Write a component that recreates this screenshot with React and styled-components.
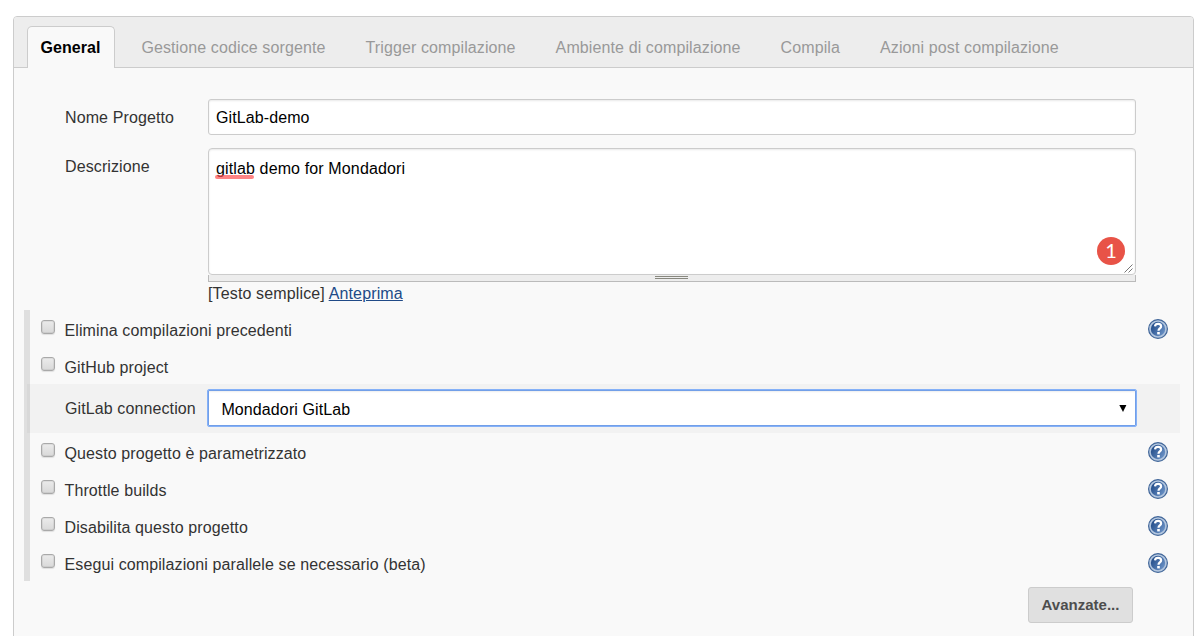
import React from "react";
import styled, { createGlobalStyle } from "styled-components";

const GlobalStyle = createGlobalStyle`
  *, *::before, *::after { box-sizing: border-box; }
  body {
    margin: 0;
    background: #fff;
    overflow: hidden;
    color: #333;
    font: 16px/20px "Liberation Sans", Arial, sans-serif;
    letter-spacing: 0.11px;
  }
`;

const Page = styled.main`
  height: 636px;
  padding: 16px 2px 0 13px;
  overflow: hidden;
`;

const Panel = styled.section`
  height: 640px;
  background: #f9f9f9;
  border: 1px solid #ccc;
  border-radius: 4px 4px 0 0;
`;

const TabBar = styled.nav`
  display: flex;
  height: 51px;
  padding: 9px 0 0 13px;
  background: #ededed;
  border-bottom: 1px solid #ccc;
  border-radius: 3px 3px 0 0;
`;

const Tab = styled.a`
  height: ${(p) => (p.$active ? 42 : 41)}px;
  width: ${(p) => (p.$active ? "88px" : "auto")};
  padding: 11px ${(p) => (p.$active ? 12.5 : 13)}px 0;
  margin-right: ${(p) => (p.$active ? 12.4 : 12)}px;
  letter-spacing: ${(p) => (p.$active ? 0.05 : 0.11)}px;
  white-space: nowrap;
  color: ${(p) => (p.$active ? "#000" : "#999")};
  font-weight: ${(p) => (p.$active ? 700 : 400)};
  background: ${(p) => (p.$active ? "#f9f9f9" : "transparent")};
  border: solid ${(p) => (p.$active ? "#ccc" : "transparent")};
  border-width: 1px 1px 0;
  border-radius: 5px 5px 0 0;
`;

const Form = styled.form`
  padding: 31px 13px 0 10px;
`;

const Field = styled.div`
  display: flex;
  padding-left: 41px;
  margin-bottom: ${(p) => p.$gap || 0}px;
`;

const FieldLabel = styled.label`
  width: 143px;
  flex: none;
  padding-top: 9px;
  white-space: nowrap;
`;

const TextInput = styled.input`
  width: 928px;
  height: 36px;
  padding: 2px 7px 0;
  font: inherit;
  letter-spacing: 0.1px;
  color: #000;
  background: #fff;
  border: 1px solid #ccc;
  border-radius: 3px;
  box-shadow: inset 0 1px 2px rgba(0, 0, 0, 0.09);
  outline: none;
`;

const Editor = styled.div`
  width: 928px;
`;

const EditorArea = styled.div`
  position: relative;
  height: 127px;
  padding: 10px 7px;
  letter-spacing: 0.13px;
  color: #000;
  background: #fff;
  border: 1px solid #ccc;
  border-radius: 4px;
  box-shadow: inset 0 1px 2px rgba(0, 0, 0, 0.09);
`;

const Misspelled = styled.span`
  position: relative;
  &::after {
    content: "";
    position: absolute;
    left: -1px;
    right: 1px;
    bottom: -2px;
    height: 4px;
    border-radius: 2px;
    background: rgba(255, 80, 80, 0.7);
  }
`;

const ErrorCount = styled.span`
  position: absolute;
  right: 10px;
  bottom: 9px;
  width: 28px;
  height: 28px;
  border-radius: 50%;
  background: #e85347;
  color: #fff;
  font: 20px/26px Lato, sans-serif;
  text-align: center;
`;

const ResizeCorner = styled.svg`
  position: absolute;
  right: 2px;
  bottom: 1px;
`;

const ResizeHandle = styled.div`
  height: 7px;
  padding: 1px 1px 0 0;
  background: #ededed;
  border: solid #bbb;
  border-width: 0 1px 1px;
`;

const Grip = styled.div`
  width: 33px;
  height: 3px;
  margin: 0 auto 0 446px;
  border: solid #88887f;
  border-width: 1px 0;
`;

const EditorMode = styled.div`
  padding-top: 2px;
  height: 28px;
  letter-spacing: 0.14px;
`;

const PreviewLink = styled.a`
  color: #204a87;
  text-decoration: underline;
`;

const Options = styled.div`
  border-left: 6px solid #dfdfdf;
`;

const OptionRow = styled.div`
  display: flex;
  height: 37px;
  padding: 0 12px 0 11px;
`;

const CheckBox = styled.span`
  flex: none;
  width: 14px;
  height: 14px;
  margin: 10px 9.5px 0 0;
  border: 1px solid #a9a9a9;
  border-radius: 3px;
  background: linear-gradient(#ebebeb, #d9d9d9);
  box-shadow: inset 0 0 0 1px rgba(0, 0, 0, 0.06), 0 1px 1px rgba(0, 0, 0, 0.1);
`;

const OptionLabel = styled.label`
  flex: 1;
  padding-top: 11px;
`;

const HelpSvg = styled.svg`
  flex: none;
  margin-top: 9px;
`;

const ConnectionRow = styled.div`
  display: flex;
  height: 49px;
  margin-left: -3px;
  padding: 5px 0 0 38px;
  background: rgba(0, 0, 0, 0.028);
`;

const ConnectionLabel = styled.label`
  width: 142px;
  flex: none;
  padding-top: 10px;
  white-space: nowrap;
`;

const SelectBox = styled.div`
  display: flex;
  align-items: center;
  justify-content: space-between;
  width: 930px;
  height: 38px;
  padding: 3px 9px 0 13.4px;
  color: #000;
  background: #fff;
  border: 1px solid #85b1f8;
  border-radius: 2px;
  box-shadow: inset 0 0 0 1px #729fe8, inset 0 3px 2px -1px rgba(0, 0, 0, 0.07);
`;

const SelectArrow = styled.svg`
  flex: none;
  margin-bottom: 2px;
`;

const Actions = styled.div`
  display: flex;
  justify-content: flex-end;
  padding: 6px 47px 0 0;
`;

const AdvancedButton = styled.button`
  width: 105px;
  height: 36px;
  padding: 0;
  font: bold 15px/20px "Liberation Sans", Arial, sans-serif;
  color: #4d4d4d;
  background: #e0e0e0;
  border: 1px solid #ccc;
  border-radius: 3px;
`;

function HelpIcon() {
  return (
    <HelpSvg width="20" height="20" viewBox="0 0 20 20">
      <defs>
        <linearGradient id="helpBlue" x1="0" y1="0.2" x2="1" y2="0.8">
          <stop offset="0" stopColor="#204a87" />
          <stop offset="1" stopColor="#6d94c8" />
        </linearGradient>
      </defs>
      <circle cx="10" cy="10" r="9.4" fill="#b4c7df" stroke="#416699" strokeWidth="1.2" />
      <circle cx="10" cy="10" r="7.2" fill="url(#helpBlue)" />
      <path
        d="M7 7.3C7.2 5.6 8.5 4.9 10.1 4.9C12 4.9 13.1 5.9 13.1 7.4C13.1 9.4 10.5 9.5 10.5 11.8"
        fill="none"
        stroke="#fff"
        strokeWidth="2.2"
      />
      <rect x="9.2" y="13" width="2.6" height="2.4" fill="#fff" />
    </HelpSvg>
  );
}

function Option({ label, help = true }) {
  return (
    <OptionRow>
      <CheckBox role="checkbox" aria-checked="false" aria-label={label} />
      <OptionLabel>{label}</OptionLabel>
      {help && <HelpIcon />}
    </OptionRow>
  );
}

const tabs = [
  "Gestione codice sorgente",
  "Trigger compilazione",
  "Ambiente di compilazione",
  "Compila",
  "Azioni post compilazione",
];

export default function App() {
  return (
    <Page>
      <GlobalStyle />
      <Panel>
        <TabBar>
          <Tab $active>General</Tab>
          {tabs.map((name) => <Tab key={name}>{name}</Tab>)}
        </TabBar>
        <Form>
          <Field $gap={13}>
            <FieldLabel>Nome Progetto</FieldLabel>
            <TextInput defaultValue="GitLab-demo" />
          </Field>
          <Field>
            <FieldLabel>Descrizione</FieldLabel>
            <Editor>
              <EditorArea>
                <Misspelled>gitlab</Misspelled> demo for Mondadori
                <ErrorCount>1</ErrorCount>
                <ResizeCorner width="9" height="9" viewBox="0 0 9 9">
                  <path d="M0.5 8.5L8.5 0.5M4.5 8.5L8.5 4.5" stroke="#666" strokeWidth="0.9" />
                </ResizeCorner>
              </EditorArea>
              <ResizeHandle><Grip /></ResizeHandle>
              <EditorMode>
                [Testo semplice] <PreviewLink>Anteprima</PreviewLink>
              </EditorMode>
            </Editor>
          </Field>
          <Options>
            <Option label="Elimina compilazioni precedenti" />
            <Option label="GitHub project" help={false} />
            <ConnectionRow>
              <ConnectionLabel>GitLab connection</ConnectionLabel>
              <SelectBox>
                <span>Mondadori GitLab</span>
                <SelectArrow width="8" height="7" viewBox="0 0 8 7"><path d="M0.3 0H7.4L4 7Z" /></SelectArrow>
              </SelectBox>
            </ConnectionRow>
            <Option label="Questo progetto è parametrizzato" />
            <Option label="Throttle builds" />
            <Option label="Disabilita questo progetto" />
            <Option label="Esegui compilazioni parallele se necessario (beta)" />
          </Options>
          <Actions>
            <AdvancedButton type="button">Avanzate...</AdvancedButton>
          </Actions>
        </Form>
      </Panel>
    </Page>
  );
}
